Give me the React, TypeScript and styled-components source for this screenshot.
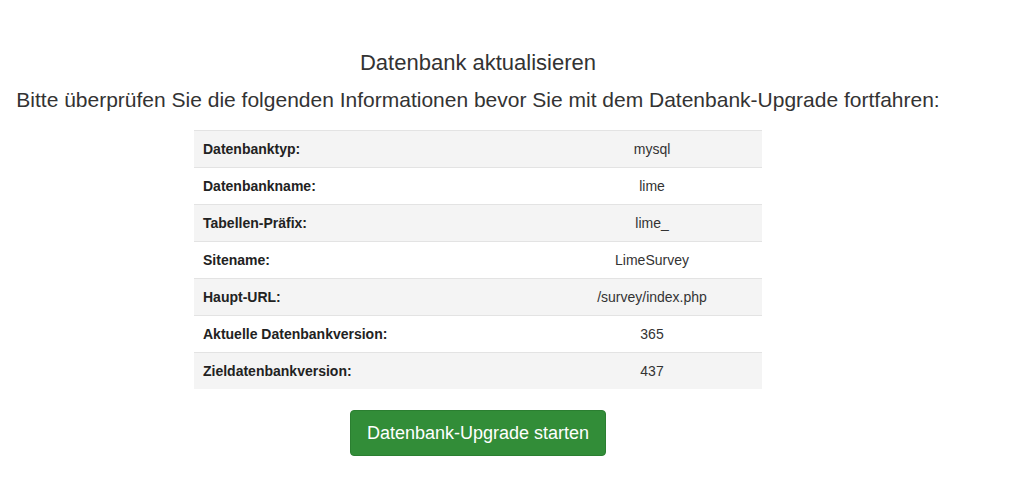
import styled, { createGlobalStyle } from "styled-components";

const GlobalStyle = createGlobalStyle`
  body {
    margin: 0;
    background: #ffffff;
    font-family: "Liberation Sans", Arial, sans-serif;
    color: #333333;
  }
`;

const Page = styled.div`
  width: 956px;
  padding-top: 49px;
  text-align: center;
`;

const Title = styled.h3`
  margin: 0;
  font-size: 22px;
  font-weight: 400;
  line-height: 28px;
`;

const Intro = styled.p`
  margin: 10px 0 17px;
  font-size: 21px;
  line-height: 26px;
`;

const Table = styled.table`
  width: 568px;
  margin: 0 auto;
  border-collapse: collapse;
  font-size: 14px;
`;

const Row = styled.tr<{ $striped: boolean }>`
  background: ${(p) => (p.$striped ? "#f4f4f4" : "#ffffff")};
  border-top: 1px solid #e3e3e3;
`;

const Label = styled.td`
  width: 330px;
  height: 36px;
  padding: 0 9px;
  text-align: left;
  font-weight: 700;
  color: #222222;
`;

const Value = styled.td`
  padding: 0 8px;
  text-align: center;
  color: #333333;
`;

const StartButton = styled.button`
  margin-top: 21px;
  width: 256px;
  height: 46px;
  border: 1px solid #2b7f31;
  border-radius: 4px;
  background: #328d38;
  color: #ffffff;
  font-family: "Liberation Sans", Arial, sans-serif;
  font-size: 18px;
  cursor: pointer;
`;

const rows = [
  ["Datenbanktyp:", "mysql"],
  ["Datenbankname:", "lime"],
  ["Tabellen-Präfix:", "lime_"],
  ["Sitename:", "LimeSurvey"],
  ["Haupt-URL:", "/survey/index.php"],
  ["Aktuelle Datenbankversion:", "365"],
  ["Zieldatenbankversion:", "437"],
];

export default function App() {
  return (
    <>
      <GlobalStyle />
      <Page>
        <Title>Datenbank aktualisieren</Title>
        <Intro>
          Bitte überprüfen Sie die folgenden Informationen bevor Sie mit dem
          Datenbank-Upgrade fortfahren:
        </Intro>
        <Table>
          <tbody>
            {rows.map(([label, value], i) => (
              <Row key={label} $striped={i % 2 === 0}>
                <Label>{label}</Label>
                <Value>{value}</Value>
              </Row>
            ))}
          </tbody>
        </Table>
        <StartButton>Datenbank-Upgrade starten</StartButton>
      </Page>
    </>
  );
}
